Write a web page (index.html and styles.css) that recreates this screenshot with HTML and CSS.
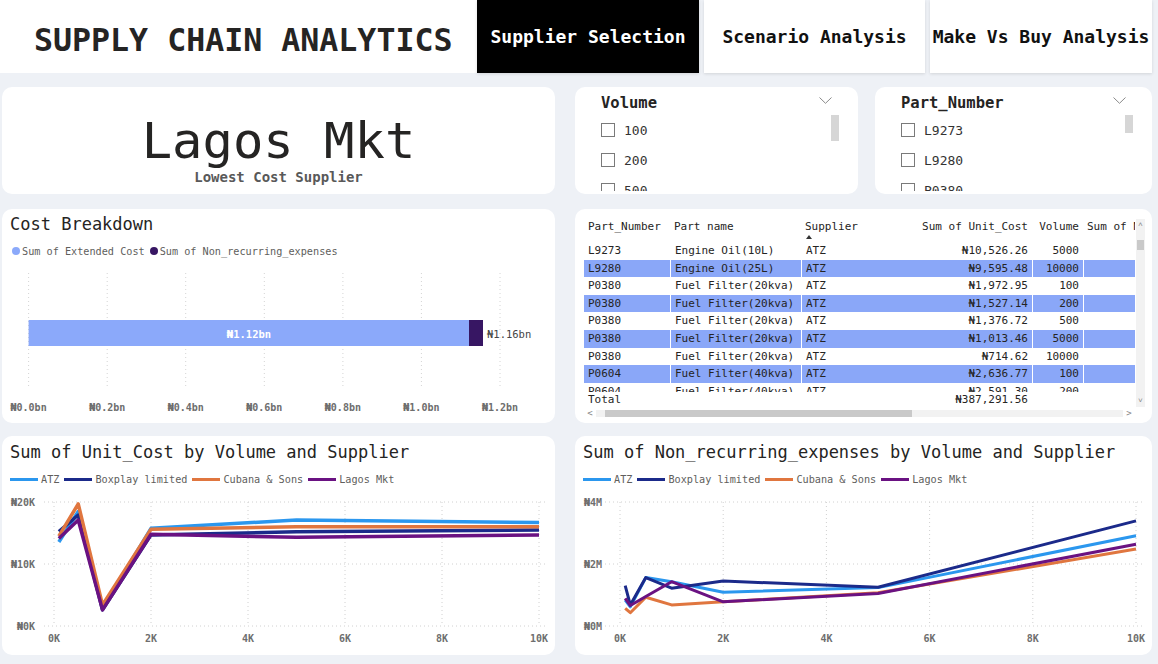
FILE: index.html
```html
<!DOCTYPE html>
<html lang="en">
<head>
<meta charset="utf-8">
<title>Supply Chain Analytics</title>
<link rel="stylesheet" href="styles.css">
</head>
<body>
<div class="page">
  <header class="topbar">
    <div class="brand">SUPPLY CHAIN ANALYTICS</div>
    <div class="tab tab-active">Supplier Selection</div>
    <div class="tab tab-2">Scenario Analysis</div>
    <div class="tab tab-3">Make Vs Buy Analysis</div>
  </header>

  <main class="grid">
    <section class="card kpi">
      <div class="kpi-value">Lagos Mkt</div>
      <div class="kpi-label">Lowest Cost Supplier</div>
    </section>

    <div class="slicers">
      <section class="card slicer slicer-volume">
        <div class="slicer-head">
          <span class="slicer-title">Volume</span>
          <svg class="chev" width="13" height="7" viewBox="0 0 13 7"><path d="M0.5 0.5 L6.5 6.3 L12.5 0.5" fill="none" stroke="#8a8a8a" stroke-width="1"/></svg>
        </div>
        <div class="slicer-body">
          <div class="slicer-list">
            <div class="slicer-item"><span class="box"></span>100</div>
            <div class="slicer-item"><span class="box"></span>200</div>
            <div class="slicer-item"><span class="box"></span>500</div>
          </div>
          <div class="slicer-scroll thumb-long"></div>
        </div>
      </section>
      <section class="card slicer slicer-part">
        <div class="slicer-head">
          <span class="slicer-title">Part_Number</span>
          <svg class="chev" width="13" height="7" viewBox="0 0 13 7"><path d="M0.5 0.5 L6.5 6.3 L12.5 0.5" fill="none" stroke="#8a8a8a" stroke-width="1"/></svg>
        </div>
        <div class="slicer-body">
          <div class="slicer-list">
            <div class="slicer-item"><span class="box"></span>L9273</div>
            <div class="slicer-item"><span class="box"></span>L9280</div>
            <div class="slicer-item"><span class="box"></span>P0380</div>
          </div>
          <div class="slicer-scroll thumb-short"></div>
        </div>
      </section>
    </div>

    <section class="card cost">
      <h2 class="card-title">Cost Breakdown</h2>
      <div class="legend legend-dots">
        <span class="lg-item"><span class="dot dot-light"></span>Sum of Extended Cost</span>
        <span class="lg-item"><span class="dot dot-dark"></span>Sum of Non_recurring_expenses</span>
      </div>
      <svg class="plot" width="553" height="165" viewBox="0 0 553 165">
        <g stroke="#d4d4d4" stroke-width="1" stroke-dasharray="1 3">
          <line x1="26.6" y1="15" x2="26.6" y2="130"/>
          <line x1="105.2" y1="15" x2="105.2" y2="130"/>
          <line x1="183.7" y1="15" x2="183.7" y2="130"/>
          <line x1="262.3" y1="15" x2="262.3" y2="130"/>
          <line x1="340.9" y1="15" x2="340.9" y2="130"/>
          <line x1="419.4" y1="15" x2="419.4" y2="130"/>
          <line x1="498" y1="15" x2="498" y2="130"/>
        </g>
        <rect x="26.6" y="62" width="440.4" height="26" fill="#8ba9fa"/>
        <rect x="467" y="62" width="14" height="26" fill="#371663"/>
        <text class="bar-in" x="247" y="76">₦1.12bn</text>
        <text class="bar-out" x="485" y="76">₦1.16bn</text>
        <g class="axis-x">
          <text x="26.6" y="149">₦0.0bn</text>
          <text x="105.2" y="149">₦0.2bn</text>
          <text x="183.7" y="149">₦0.4bn</text>
          <text x="262.3" y="149">₦0.6bn</text>
          <text x="340.9" y="149">₦0.8bn</text>
          <text x="419.4" y="149">₦1.0bn</text>
          <text x="498" y="149">₦1.2bn</text>
        </g>
      </svg>
    </section>

    <section class="card tablecard">
      <div class="tbl-wrap">
        <div class="tbl">
          <div class="trow thead">
            <div class="c">Part_Number</div>
            <div class="c">Part name</div>
            <div class="c">Supplier<span class="sort"></span></div>
            <div class="c num">Sum of Unit_Cost</div>
            <div class="c num">Volume</div>
            <div class="c">Sum of Non_recurring_expenses</div>
          </div>
          <div class="tbody">
            <div class="trow"><div class="c">L9273</div><div class="c sep">Engine Oil(10L)</div><div class="c sep">ATZ</div><div class="c num">₦10,526.26</div><div class="c num sep">5000</div><div class="c sep"></div></div>
            <div class="trow hl"><div class="c">L9280</div><div class="c sep">Engine Oil(25L)</div><div class="c sep">ATZ</div><div class="c num">₦9,595.48</div><div class="c num sep">10000</div><div class="c sep"></div></div>
            <div class="trow"><div class="c">P0380</div><div class="c sep">Fuel Filter(20kva)</div><div class="c sep">ATZ</div><div class="c num">₦1,972.95</div><div class="c num sep">100</div><div class="c sep"></div></div>
            <div class="trow hl"><div class="c">P0380</div><div class="c sep">Fuel Filter(20kva)</div><div class="c sep">ATZ</div><div class="c num">₦1,527.14</div><div class="c num sep">200</div><div class="c sep"></div></div>
            <div class="trow"><div class="c">P0380</div><div class="c sep">Fuel Filter(20kva)</div><div class="c sep">ATZ</div><div class="c num">₦1,376.72</div><div class="c num sep">500</div><div class="c sep"></div></div>
            <div class="trow hl"><div class="c">P0380</div><div class="c sep">Fuel Filter(20kva)</div><div class="c sep">ATZ</div><div class="c num">₦1,013.46</div><div class="c num sep">5000</div><div class="c sep"></div></div>
            <div class="trow"><div class="c">P0380</div><div class="c sep">Fuel Filter(20kva)</div><div class="c sep">ATZ</div><div class="c num">₦714.62</div><div class="c num sep">10000</div><div class="c sep"></div></div>
            <div class="trow hl"><div class="c">P0604</div><div class="c sep">Fuel Filter(40kva)</div><div class="c sep">ATZ</div><div class="c num">₦2,636.77</div><div class="c num sep">100</div><div class="c sep"></div></div>
            <div class="trow"><div class="c">P0604</div><div class="c sep">Fuel Filter(40kva)</div><div class="c sep">ATZ</div><div class="c num">₦2,591.30</div><div class="c num sep">200</div><div class="c sep"></div></div>
          </div>
          <div class="trow tfoot">
            <div class="c">Total</div>
            <div class="c"></div>
            <div class="c"></div>
            <div class="c num">₦387,291.56</div>
            <div class="c"></div>
            <div class="c"></div>
          </div>
        </div>
        <div class="vscroll">
          <span class="arr">˄</span>
          <span class="vthumb"></span>
          <span class="vspace"></span>
          <span class="arr">˅</span>
        </div>
      </div>
      <div class="hscroll">
        <span class="harr">&lt;</span>
        <span class="htrack"><span class="hthumb"></span></span>
        <span class="harr">&gt;</span>
      </div>
    </section>

    <section class="card chart">
      <h2 class="card-title">Sum of Unit_Cost by Volume and Supplier</h2>
      <div class="legend legend-lines">
        <span class="lg-item"><span class="ln ln-atz"></span>ATZ</span>
        <span class="lg-item"><span class="ln ln-box"></span>Boxplay limited</span>
        <span class="lg-item"><span class="ln ln-cub"></span>Cubana &amp; Sons</span>
        <span class="lg-item"><span class="ln ln-lag"></span>Lagos Mkt</span>
      </div>
      <svg class="plot" width="553" height="169" viewBox="0 0 553 169">
        <g stroke="#d0d0d0" stroke-width="1" stroke-dasharray="1 3">
          <line x1="42" y1="16" x2="544" y2="16"/>
          <line x1="42" y1="78" x2="544" y2="78"/>
          <line x1="42" y1="140" x2="544" y2="140"/>
          <line x1="52" y1="16" x2="52" y2="140"/>
          <line x1="149" y1="16" x2="149" y2="140"/>
          <line x1="246" y1="16" x2="246" y2="140"/>
          <line x1="343" y1="16" x2="343" y2="140"/>
          <line x1="440" y1="16" x2="440" y2="140"/>
          <line x1="537" y1="16" x2="537" y2="140"/>
        </g>
        <g class="axis-y">
          <text x="33" y="16">₦20K</text>
          <text x="33" y="78">₦10K</text>
          <text x="33" y="140">₦0K</text>
        </g>
        <g class="axis-x">
          <text x="52" y="152">0K</text>
          <text x="149" y="152">2K</text>
          <text x="246" y="152">4K</text>
          <text x="343" y="152">6K</text>
          <text x="440" y="152">8K</text>
          <text x="537" y="152">10K</text>
        </g>
        <g fill="none" stroke-width="3.5" stroke-linejoin="round">
          <polyline stroke="#2b97ee" points="56.85,56 76.25,25.5 100.5,122.3 149,42.35 294.5,34 537,36.5"/>
          <polyline stroke="#1b2a8a" points="56.85,45.5 76.25,29 100.5,123.9 149,48.9 294.5,45.8 537,43.9"/>
          <polyline stroke="#e0763f" points="56.85,50.1 76.25,17.9 100.5,118.9 149,43.3 294.5,40.8 537,40.8"/>
          <polyline stroke="#6a1282" points="56.85,52.6 76.25,34 100.5,123.9 149,48.2 294.5,51.3 537,48.9"/>
        </g>
      </svg>
    </section>

    <section class="card chart">
      <h2 class="card-title">Sum of Non_recurring_expenses by Volume and Supplier</h2>
      <div class="legend legend-lines">
        <span class="lg-item"><span class="ln ln-atz"></span>ATZ</span>
        <span class="lg-item"><span class="ln ln-box"></span>Boxplay limited</span>
        <span class="lg-item"><span class="ln ln-cub"></span>Cubana &amp; Sons</span>
        <span class="lg-item"><span class="ln ln-lag"></span>Lagos Mkt</span>
      </div>
      <svg class="plot" width="577" height="169" viewBox="0 0 577 169">
        <g stroke="#d0d0d0" stroke-width="1" stroke-dasharray="1 3">
          <line x1="30" y1="16" x2="570" y2="16"/>
          <line x1="30" y1="78" x2="570" y2="78"/>
          <line x1="30" y1="140" x2="570" y2="140"/>
          <line x1="45" y1="16" x2="45" y2="140"/>
          <line x1="148.2" y1="16" x2="148.2" y2="140"/>
          <line x1="251.4" y1="16" x2="251.4" y2="140"/>
          <line x1="354.6" y1="16" x2="354.6" y2="140"/>
          <line x1="457.8" y1="16" x2="457.8" y2="140"/>
          <line x1="561" y1="16" x2="561" y2="140"/>
        </g>
        <g class="axis-y">
          <text x="27" y="16">₦4M</text>
          <text x="27" y="78">₦2M</text>
          <text x="27" y="140">₦0M</text>
        </g>
        <g class="axis-x">
          <text x="45" y="152">0K</text>
          <text x="148.2" y="152">2K</text>
          <text x="251.4" y="152">4K</text>
          <text x="354.6" y="152">6K</text>
          <text x="457.8" y="152">8K</text>
          <text x="561" y="152">10K</text>
        </g>
        <g fill="none" stroke-width="3" stroke-linejoin="round">
          <polyline stroke="#2b97ee" points="50.2,114 55.3,120.8 70.8,91.6 96.6,95.7 148.2,106.2 303,101.6 561,49.8"/>
          <polyline stroke="#1b2a8a" points="50.2,99.7 55.3,118.9 70.8,91.6 96.6,102.2 148.2,95.05 303,101.25 561,34.9"/>
          <polyline stroke="#e0763f" points="50.2,122.3 55.3,126.7 70.8,111.2 96.6,118.9 148.2,115.8 303,106.8 561,63.1"/>
          <polyline stroke="#6a1282" points="50.2,112.4 55.3,119.5 70.8,110.55 96.6,95.7 148.2,115.8 303,107.45 561,58.2"/>
        </g>
      </svg>
    </section>
  </main>
</div>
</body>
</html>
```

FILE: styles.css
```css
* { box-sizing: border-box; }

html, body {
  margin: 0;
  padding: 0;
}

body {
  width: 1158px;
  height: 664px;
  overflow: hidden;
  background: #eef1f6;
  font-family: "DejaVu Sans Mono", "Liberation Mono", monospace;
  color: #252423;
}

.page {
  width: 1158px;
  height: 664px;
}

/* ---------- top bar ---------- */
.topbar {
  display: flex;
  height: 73px;
  padding-right: 6px;
}

.brand {
  width: 477px;
  background: #fff;
  display: flex;
  align-items: center;
  padding: 6px 0 0 34px;
  font-size: 31.6px;
  font-weight: bold;
  color: #252423;
  white-space: nowrap;
}

.tab {
  width: 222px;
  background: #fff;
  display: flex;
  align-items: center;
  justify-content: center;
  font-size: 18px;
  font-weight: bold;
  color: #111;
  white-space: nowrap;
  box-shadow: 0 1px 3px rgba(0, 0, 0, 0.12);
}

.tab-active {
  background: #000;
  color: #fff;
}

.tab-2 { margin-left: 5px; width: 221px; }
.tab-3 { margin-left: 5px; }

/* ---------- grid ---------- */
.grid {
  display: grid;
  grid-template-columns: 553px 577px;
  grid-template-rows: 107px 229px 232px;
  column-gap: 20px;
  padding: 14px 6px 0 2px;
}

.card {
  background: #fff;
  border-radius: 10px;
  overflow: hidden;
}

.cost, .tablecard {
  align-self: end;
  height: 214px;
}

.chart {
  align-self: end;
  height: 219px;
}

/* ---------- KPI ---------- */
.kpi {
  text-align: center;
  padding-top: 26px;
}

.kpi-value {
  font-size: 50.5px;
  line-height: 56px;
  color: #252423;
}

.kpi-label {
  font-size: 14px;
  line-height: 17px;
  font-weight: bold;
  color: #595959;
}

/* ---------- slicers ---------- */
.slicers {
  display: flex;
  gap: 17px;
}

.slicer {
  padding: 7px 19px 0 26px;
}

.slicer-volume { width: 283px; }
.slicer-part { flex: 1; }

.slicer-head {
  display: flex;
  justify-content: space-between;
  height: 18px;
  align-items: center;
}

.slicer-title {
  font-size: 15.5px;
  font-weight: bold;
  color: #252423;
}

.chev {
  align-self: flex-start;
  margin-top: 3px;
  margin-right: 7px;
}

.slicer-body {
  display: flex;
  margin-top: 3px;
  height: 76px;
  overflow: hidden;
}

.slicer-list { flex: 1; }

.slicer-item {
  height: 30px;
  display: flex;
  align-items: center;
  font-size: 13px;
  color: #333;
}

.box {
  width: 14px;
  height: 14px;
  border: 1px solid #7a7a7a;
  margin-right: 9px;
  flex: none;
}

.slicer-scroll {
  width: 8px;
  background: #d6d6d6;
}

.thumb-long { height: 26px; }
.thumb-short { height: 18px; }

/* ---------- card titles / legends ---------- */
.card-title {
  margin: 0;
  padding-left: 8px;
  font-size: 17px;
  line-height: 20px;
  font-weight: normal;
  color: #252423;
  white-space: nowrap;
}

.cost { padding-top: 5px; }
.chart { padding-top: 6px; }

.legend {
  display: flex;
  align-items: center;
  height: 14px;
  margin-top: 10px;
  font-size: 10.2px;
  color: #605e5c;
  white-space: nowrap;
}

.legend-dots {
  padding-left: 10px;
  gap: 5px;
}

.legend-lines {
  padding-left: 8px;
  gap: 5px;
}

.lg-item {
  display: flex;
  align-items: center;
}

.dot {
  width: 8px;
  height: 8px;
  border-radius: 50%;
  margin-right: 2px;
}

.dot-light { background: #8ba9fa; }
.dot-dark { background: #371663; }

.ln {
  width: 28px;
  height: 3px;
  margin-right: 3px;
}

.ln-atz { background: #2b97ee; }
.ln-box { background: #1b2a8a; }
.ln-cub { background: #e0763f; }
.ln-lag { background: #6a1282; }

.plot {
  display: block;
  font-family: "DejaVu Sans Mono", "Liberation Mono", monospace;
}

.axis-x text {
  font-size: 10px;
  font-weight: bold;
  fill: #6e6e6e;
  text-anchor: middle;
  dominant-baseline: central;
}

.axis-y text {
  font-size: 10px;
  font-weight: bold;
  fill: #6e6e6e;
  text-anchor: end;
  dominant-baseline: central;
}

.bar-in {
  font-size: 10.5px;
  font-weight: bold;
  fill: #fff;
  text-anchor: middle;
  dominant-baseline: central;
}

.bar-out {
  font-size: 10.5px;
  fill: #444;
  dominant-baseline: central;
}

/* ---------- table ---------- */
.tablecard {
  padding: 10px 0 0 9px;
}

.tbl-wrap {
  display: flex;
}

.tbl {
  width: 551px;
  overflow: hidden;
  font-size: 11px;
  color: #252423;
}

.trow {
  display: grid;
  grid-template-columns: 86px 131px 100px 131px 51px 120px;
  width: 619px;
  height: 17.6px;
  line-height: 17.6px;
  white-space: nowrap;
}

.c {
  padding: 0 4px;
  overflow: hidden;
}

.num { text-align: right; }
.sep { border-left: 1px solid #fff; }

.hl { background: #8aa7f8; }

.thead {
  height: 23px;
  line-height: 14px;
  padding-top: 1px;
}

.thead .c { overflow: visible; }

.sort {
  display: block;
  width: 0;
  height: 0;
  margin: 1px 0 0 1px;
  border-left: 3px solid transparent;
  border-right: 3px solid transparent;
  border-bottom: 4px solid #333;
}

.tbody {
  height: 150px;
  overflow: hidden;
}

.tfoot {
  height: 15px;
  line-height: 15px;
}

.vscroll {
  width: 9px;
  margin-left: 1px;
  background: #f2f2f2;
  display: flex;
  flex-direction: column;
  align-items: center;
  font-size: 8px;
  color: #888;
}

.arr {
  line-height: 12px;
  height: 12px;
}

.vthumb {
  width: 7px;
  height: 10px;
  margin-top: 9px;
  background: #c9c9c9;
}

.vspace { flex: 1; }

.hscroll {
  display: flex;
  align-items: center;
  width: 551px;
  height: 7px;
  margin-top: 3px;
  font-size: 9px;
  color: #888;
}

.harr {
  width: 12px;
  text-align: center;
  line-height: 7px;
}

.htrack {
  flex: 1;
  height: 7px;
  background: #f2f2f2;
}

.hthumb {
  display: block;
  width: 307px;
  height: 7px;
  margin-left: 9px;
  background: #c9c9c9;
}
```
